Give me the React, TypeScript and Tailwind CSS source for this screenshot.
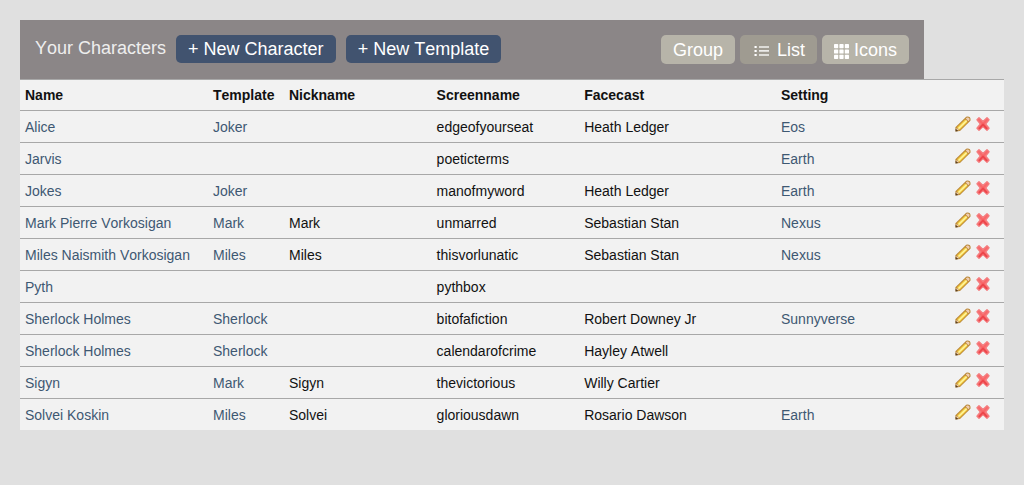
import React from "react";

type Character = {
  name: string;
  template?: string;
  nickname?: string;
  screenname: string;
  facecast?: string;
  setting?: string;
};

const characters: Character[] = [
  { name: "Alice", template: "Joker", screenname: "edgeofyourseat", facecast: "Heath Ledger", setting: "Eos" },
  { name: "Jarvis", screenname: "poeticterms", setting: "Earth" },
  { name: "Jokes", template: "Joker", screenname: "manofmyword", facecast: "Heath Ledger", setting: "Earth" },
  { name: "Mark Pierre Vorkosigan", template: "Mark", nickname: "Mark", screenname: "unmarred", facecast: "Sebastian Stan", setting: "Nexus" },
  { name: "Miles Naismith Vorkosigan", template: "Miles", nickname: "Miles", screenname: "thisvorlunatic", facecast: "Sebastian Stan", setting: "Nexus" },
  { name: "Pyth", screenname: "pythbox" },
  { name: "Sherlock Holmes", template: "Sherlock", screenname: "bitofafiction", facecast: "Robert Downey Jr", setting: "Sunnyverse" },
  { name: "Sherlock Holmes", template: "Sherlock", screenname: "calendarofcrime", facecast: "Hayley Atwell" },
  { name: "Sigyn", template: "Mark", nickname: "Sigyn", screenname: "thevictorious", facecast: "Willy Cartier" },
  { name: "Solvei Koskin", template: "Miles", nickname: "Solvei", screenname: "gloriousdawn", facecast: "Rosario Dawson", setting: "Earth" },
];

function ListIcon() {
  return (
    <svg className="mt-px" width="18" height="12" viewBox="0 0 18 12" fill="#fff" aria-hidden="true">
      <path d="M2.5 1h2.2v2H2.5zM2.5 5h2.2v2H2.5zM2.5 9h2.2v2H2.5z" />
      <path d="M7 1h10v2H7zM7 9h10v2H7z" opacity=".65" />
      <path d="M7 5.2h10v1.4H7z" />
    </svg>
  );
}

function GridIcon() {
  return (
    <svg className="mt-[3px]" width="15" height="15" viewBox="0 0 15 15" fill="#fff" aria-hidden="true">
      {[0, 5.4, 10.8].map((y) =>
        [0, 5.4, 10.8].map((x) => <rect key={`${x}-${y}`} x={x} y={y} width="4.2" height="4.2" rx="0.7" />)
      )}
    </svg>
  );
}

function PencilIcon() {
  return (
    <svg width="16" height="16" viewBox="0 0 16 16" aria-hidden="true">
      <path d="M.6 15.4.4 11.2 11.2.8Q13.2.1 14.9 1.2 16 2.8 15.4 4.8L5 15Z" fill="#b98636" />
      <path d="M1.3 14.3 1.6 11.7 4.5 14.2Z" fill="#efcfa8" />
      <path d="M1.8 11.2 10.1 3.2 12.9 5.9 4.8 13.9Z" fill="#edc23c" />
      <path d="M2.9 12.1 11.1 4.1 12.2 5.2 4 13.2Z" fill="#fff59a" />
      <path d="M10.8 2.5 12 1.6Q13.2 1.2 14.1 2 14.9 3 14.4 4.2L13.4 5.2Z" fill="#f0cdb0" />
      <path d="M.5 15.4.6 12.8 3.2 15.1Z" fill="#5a4022" />
    </svg>
  );
}

function CrossIcon() {
  return (
    <svg width="16" height="16" viewBox="0 0 16 16" aria-hidden="true">
      <path
        d="M2 3.8 4 1.8 8 5.4 12 1.8 14 3.8 10.6 8 14 12.2 12 14.2 8 10.6 4 14.2 2 12.2 5.4 8Z"
        fill="#f9686a"
        stroke="#f47c7e"
        strokeWidth="1.4"
        strokeLinejoin="round"
      />
      <path d="M4 12.8 8 8.6l4 4.2" stroke="#ec464b" strokeWidth="1.8" fill="none" />
    </svg>
  );
}

function TextLink({ children }: { children?: string }) {
  return children ? (
    <a href="#" className="text-[#3e5872]">
      {children}
    </a>
  ) : null;
}

const headings = [
  { label: "Name", width: "w-[188px]" },
  { label: "Template", width: "w-[76px]" },
  { label: "Nickname", width: "w-[15%]" },
  { label: "Screenname", width: "w-[15%]" },
  { label: "Facecast", width: "w-[20%]" },
  { label: "Setting", width: "" },
];

const primaryButton = "h-7 rounded-[5px] bg-[#41536f] px-3 text-white";
const viewButton = "flex h-[29px] items-center rounded-[5px] px-3 pt-px text-white";

export default function App() {
  return (
    <main className="min-h-screen bg-[#e0e0e0] p-5 font-['Liberation_Sans',Arial,sans-serif] text-sm text-[#111] [font-kerning:none]">
      <header className="mr-20 flex h-[59px] items-start justify-between bg-[#8b8687] px-[15px] pt-[15px] text-lg leading-7">
        <div className="flex gap-[10px]">
          <h1 className="-mt-px text-[#eee]">Your Characters</h1>
          <button className={primaryButton}>+ New Character</button>
          <button className={primaryButton}>+ New Template</button>
        </div>
        <div className="flex gap-[5px]">
          <button className={`${viewButton} bg-[#b7b4a9]`}>Group</button>
          <button className={`${viewButton} gap-[7px] bg-[#9f9b91]`} aria-pressed="true">
            <ListIcon />
            List
          </button>
          <button className={`${viewButton} gap-[5px] bg-[#b7b4a9]`}>
            <GridIcon />
            Icons
          </button>
        </div>
      </header>
      <table className="w-full table-fixed border-separate border-spacing-0 bg-[#f2f2f2] text-left">
        <thead>
          <tr className="h-[31px]">
            {headings.map(({ label, width }) => (
              <th key={label} className={`${width} border-t border-[#a8a8a8] px-[5px] font-bold`}>
                {label}
              </th>
            ))}
            <th className="w-[54px] border-t border-[#a8a8a8]" aria-label="Actions" />
          </tr>
        </thead>
        <tbody>
          {characters.map((c) => (
            <tr key={c.screenname} className="h-8 *:border-t *:border-[#a8a8a8] *:px-[5px]">
              <td><TextLink>{c.name}</TextLink></td>
              <td><TextLink>{c.template}</TextLink></td>
              <td>{c.nickname}</td>
              <td>{c.screenname}</td>
              <td>{c.facecast}</td>
              <td><TextLink>{c.setting}</TextLink></td>
              <td className="align-top">
                <div className="flex gap-1 pt-[5px]">
                  <a href="#" aria-label={`Edit ${c.name}`}><PencilIcon /></a>
                  <a href="#" aria-label={`Delete ${c.name}`}><CrossIcon /></a>
                </div>
              </td>
            </tr>
          ))}
        </tbody>
      </table>
    </main>
  );
}
